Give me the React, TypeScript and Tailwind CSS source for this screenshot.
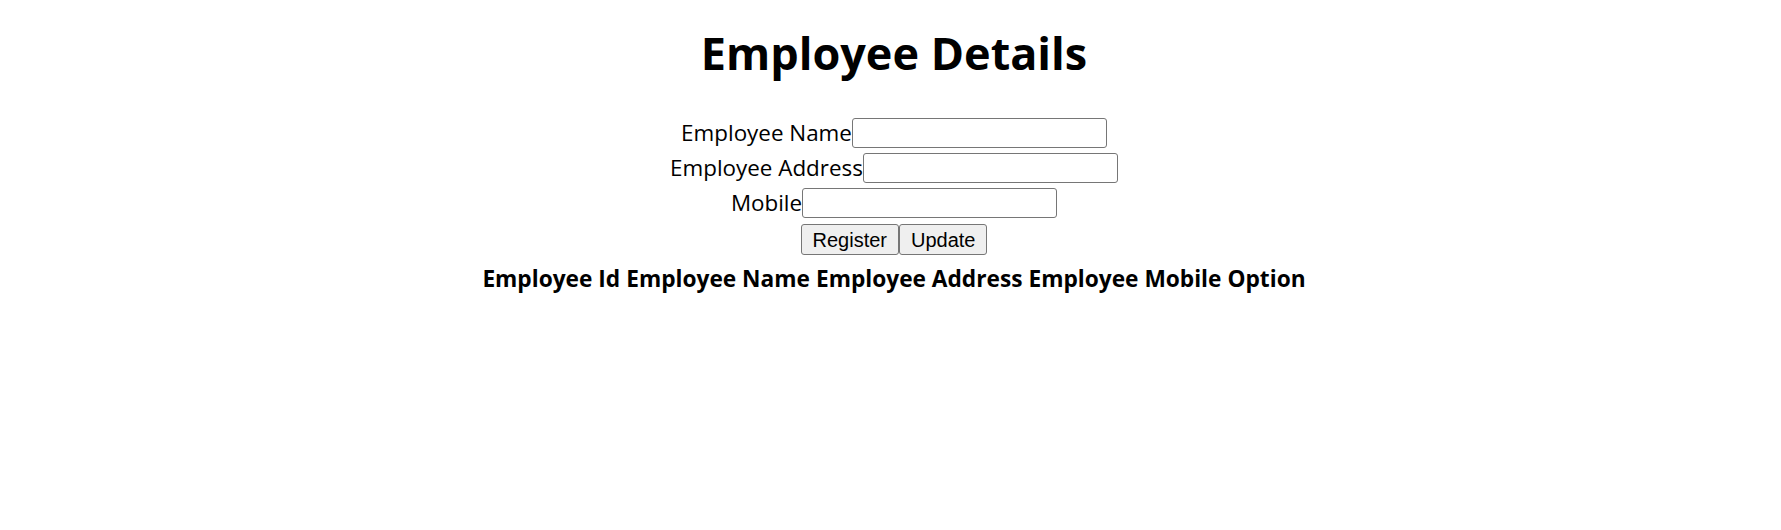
export default function App() {
  return (
    <div className="min-h-screen bg-white text-black font-['Open_Sans',sans-serif] pl-[7px]">
      <h1 className="text-center text-[45px] font-bold leading-[64px] pt-[21px] mb-[30px]">Employee Details</h1>

      {/* form rows */}
      <div className="flex flex-col items-center text-[22.4px]">
        <div className="flex items-center h-[35px]">
          <span>Employee Name</span>
          <input className="w-[255px] h-[30px] border border-[#767676] rounded-[3px]" />
        </div>
        <div className="flex items-center h-[35px]">
          <span>Employee Address</span>
          <input className="w-[255px] h-[30px] border border-[#767676] rounded-[3px]" />
        </div>
        <div className="flex items-center h-[35px]">
          <span>Mobile</span>
          <input className="w-[255px] h-[30px] border border-[#767676] rounded-[3px]" />
        </div>
        <div className="flex items-center h-[33px] mt-[3px] font-['Liberation_Sans',sans-serif] text-[20px]">
          <button className="h-[31px] px-[11px] bg-[#efefef] border border-[#767676] rounded-[3px]">Register</button>
          <button className="h-[31px] px-[11px] bg-[#efefef] border border-[#767676] rounded-[3px]">Update</button>
        </div>
      </div>

      {/* table header */}
      <div className="flex justify-center gap-[6px] mt-[3px] text-[22.7px] font-bold leading-[40px]">
        <span>Employee Id</span>
        <span>Employee Name</span>
        <span>Employee Address</span>
        <span>Employee Mobile</span>
        <span>Option</span>
      </div>
    </div>
  );
}
